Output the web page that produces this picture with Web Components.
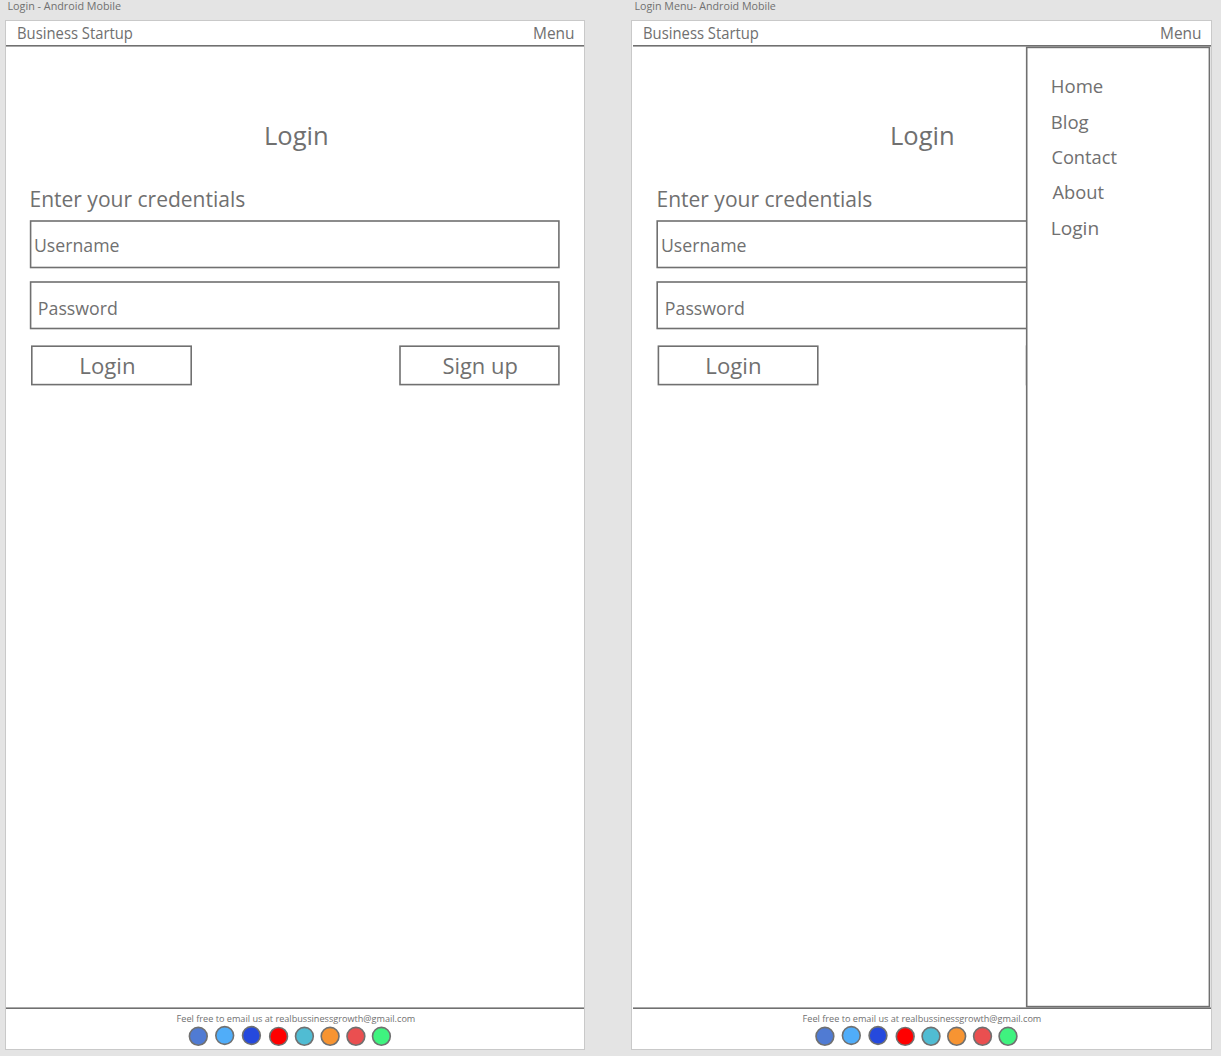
<!DOCTYPE html>
<html lang="en">
<head>
<meta charset="utf-8">
<title>Login - Android Mobile</title>
<style>
html,body{margin:0;height:100%;overflow:hidden;background:#e4e4e4}
body{font-family:"Open Sans","Noto Sans",sans-serif;color:#707070}
</style>
</head>
<body>
<art-boards></art-boards>
<script>
// A single line of text whose inked width is set by the "width" attribute.
class FitText extends HTMLElement {
  connectedCallback() {
    if (this.shadowRoot) return;
    const f = +this.getAttribute('size'), w = +this.getAttribute('width'), lh = this.getAttribute('line');
    const root = this.attachShadow({mode: 'open'});
    root.innerHTML = `<style>
      :host{display:block;flex:none;width:${w}px;height:${lh}px;white-space:nowrap;font-size:${f}px;line-height:${lh}px}
      span{display:inline-block;vertical-align:top;transform-origin:0 0}
    </style><span><slot></slot></span>`;
    const c = document.createElement('canvas').getContext('2d');
    c.font = `${f * 10}px "Open Sans","Noto Sans",sans-serif`;
    const m = c.measureText(this.textContent);
    const l = -m.actualBoundingBoxLeft / 10, r = m.actualBoundingBoxRight / 10;
    const s = (w - 0.8) / (r - l);
    root.querySelector('span').style.transform = `translateX(${0.5 - l * s}px) scaleX(${s})`;
  }
}
customElements.define('fit-text', FitText);

// A container drawn with a 1.6px outline; "rect" is x y width height of the stroke.
class OutlineBox extends HTMLElement {
  connectedCallback() {
    if (this.shadowRoot) return;
    const [x, y, w, h] = this.getAttribute('rect').split(' ');
    this.attachShadow({mode: 'open'}).innerHTML = `<style>
      :host{display:grid;flex:none;box-sizing:border-box}
      svg{grid-area:1/1;width:100%;height:100%;overflow:visible;min-height:0}
      rect{transform:translateX(var(--sx,0px))}
      div{grid-area:1/1;position:relative;box-sizing:border-box;padding:var(--pad,0)}
    </style>
    <svg><rect x="${x}" y="${y}" width="${w}" height="${h}" fill="#fff" stroke="#707070" stroke-width="1.6"/></svg>
    <div><slot></slot></div>`;
  }
}
customElements.define('outline-box', OutlineBox);

class RuleLine extends HTMLElement {
  connectedCallback() {
    if (this.shadowRoot) return;
    this.attachShadow({mode: 'open'}).innerHTML = `<style>
      :host{display:block;height:2px;margin-left:var(--rule,0px);background:linear-gradient(var(--a) 50%,var(--b) 50%)}
    </style>`;
  }
}
customElements.define('rule-line', RuleLine);

class SocialDots extends HTMLElement {
  connectedCallback() {
    if (this.shadowRoot) return;
    const dots = [[10.3,12.3,'#507bd3'],[36.7,11.5,'#50adf9'],[63.4,11.5,'#2549dd'],[90.6,12.4,'#ff0000'],
      [116.4,12.3,'#50bcd3'],[142.1,12.3,'#f79432'],[167.9,12.3,'#ea4f50'],[193.4,12.3,'#3ff37f']];
    this.attachShadow({mode: 'open'}).innerHTML = `<style>:host{display:block}svg{display:block}g{transform:translateX(var(--sx,0px))}</style>
      <svg width="204" height="25"><g>${dots.map(([x,y,c]) =>
        `<circle cx="${x}" cy="${y}" r="8.9" fill="${c}" stroke="#707070" stroke-width="1.6"/>`).join('')}</g></svg>`;
  }
}
customElements.define('social-dots', SocialDots);

class SideMenu extends HTMLElement {
  connectedCallback() {
    if (this.shadowRoot) return;
    const items = [['Home',50.7],['Blog',36.7],['Contact',65],['About',52],['Login',46]];
    this.attachShadow({mode: 'open'}).innerHTML = `<style>
      :host{display:block}
      outline-box{width:185px;height:962px;--sx:0px;--pad:22px 0 0 26.4px}
      nav{display:flex;flex-direction:column}
      fit-text:nth-child(4){margin:-1px 0 1px}
    </style><outline-box rect="0.7 1.4 182.7 959.2"><nav>${items.map(([t,w]) =>
      `<fit-text size="18.3" line="35.5" width="${w}">${t}</fit-text>`).join('')}</nav></outline-box>`;
  }
}
customElements.define('side-menu', SideMenu);

class LoginScreen extends HTMLElement {
  connectedCallback() {
    if (this.shadowRoot) return;
    this.attachShadow({mode: 'open'}).innerHTML = `<style>
      :host{display:flex;flex-direction:column;position:relative;box-sizing:border-box;height:1030px;background:#fff;border:1px solid #c9c9c9;width:var(--w)}
      header{display:flex;justify-content:space-between;height:23px;padding:1px 10.6px 0 calc(11.5px + var(--dx,0px))}
      main{flex:1;display:flex;flex-direction:column;padding-left:calc(24px + var(--dx,0px))}
      .title{margin:71px 0 0 235.6px}
      .lead{margin:31px 0 7px .8px}
      .field{width:530px;height:48px}
      .user{--pad:2px 0 0 5.4px;margin-bottom:13px}
      .pass{--pad:4px 0 0 8.9px}
      .actions{display:flex;justify-content:space-between;width:530px;margin-top:16px}
      .btn{height:40px;width:161px}
      .in{--pad:1px 0 0 49.5px;margin-left:1px}
      .up{--pad:1px 0 0 44.3px}
      footer{height:40px;padding-left:calc(170.5px + var(--dx,0px))}
      .mail{margin-top:4px}
      social-dots{margin:-1px 0 0 11.7px}
      footer{display:flex;flex-direction:column}
      ::slotted(side-menu){position:absolute;right:0;top:25px}
    </style>
    <header><fit-text size="15.4" line="24" width="114.5">Business Startup</fit-text><fit-text size="15.4" line="24" width="39.6">Menu</fit-text></header>
    <rule-line style="--a:#707070;--b:#a9a9a9"></rule-line>
    <main>
      <fit-text class="title" size="25.6" line="36" width="61">Login</fit-text>
      <fit-text class="lead" size="21.6" line="28" width="213.8">Enter your credentials</fit-text>
      <outline-box class="field user" rect="0.6 1 528.3 46.5"><fit-text size="18.3" line="46" width="84">Username</fit-text></outline-box>
      <outline-box class="field pass" rect="0.6 1 528.3 46.5"><fit-text size="18.3" line="46" width="77.8">Password</fit-text></outline-box>
      <div class="actions">
        <outline-box class="btn in" rect="0.8 1.2 159.4 38.4"><fit-text size="21.6" line="40" width="53">Login</fit-text></outline-box>
        <outline-box class="btn up" rect="1 1.2 158.9 38.4"><fit-text size="21.6" line="40" width="74">Sign up</fit-text></outline-box>
      </div>
    </main>
    <rule-line style="--a:#a9a9a9;--b:#707070"></rule-line>
    <footer><fit-text class="mail" size="9.3" line="12" width="238">Feel free to email us at realbussinessgrowth@gmail.com</fit-text><social-dots></social-dots></footer>
    <slot></slot>`;
  }
}
customElements.define('login-screen', LoginScreen);

class ArtBoards extends HTMLElement {
  connectedCallback() {
    this.attachShadow({mode: 'open'}).innerHTML = `<style>
      :host{display:flex;gap:46px;padding-left:5px}
      section{display:flex;flex-direction:column}
      .label{margin:0 0 8px 3px}
      section+section .label{margin-left:3.6px}
      header{padding-top:1px}
    </style>
    <section><fit-text class="label" size="10.7" line="12" width="113">Login - Android Mobile</fit-text><login-screen style="--w:580px"></login-screen></section>
    <section><fit-text class="label" size="10.7" line="12" width="140.8">Login Menu- Android Mobile</fit-text><login-screen style="--w:581px;--dx:.8px;--sx:-.4px;--rule:1px"><side-menu></side-menu></login-screen></section>`;
  }
}
customElements.define('art-boards', ArtBoards);
</script>
</body>
</html>
